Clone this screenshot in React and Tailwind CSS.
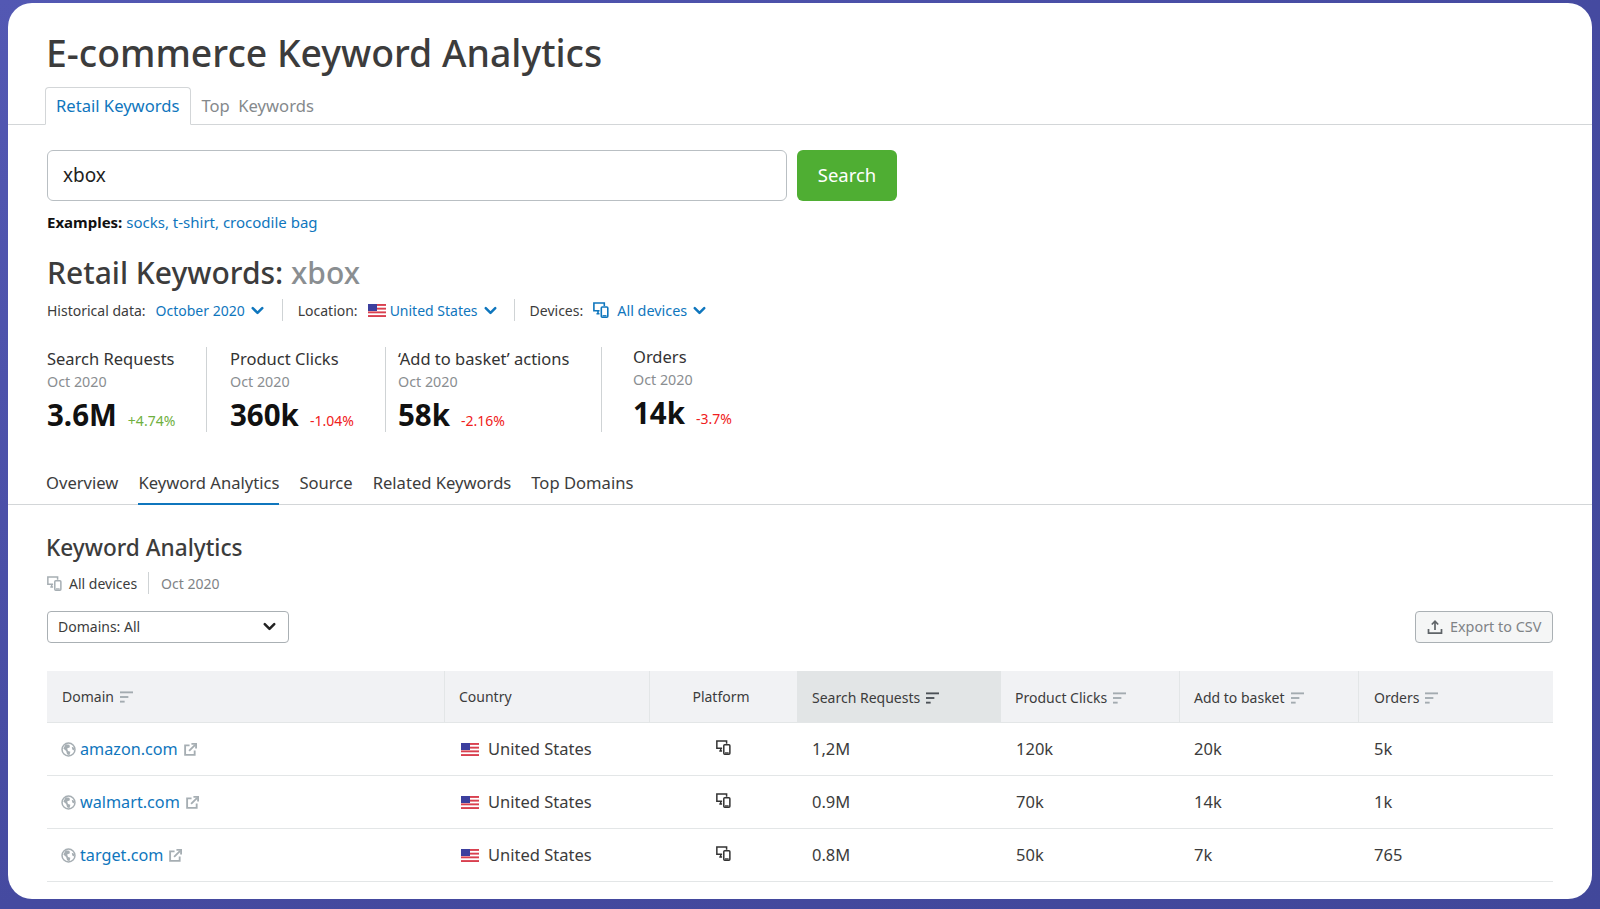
import React from 'react';
import { ChevronDown } from 'lucide-react';

const font = { fontFamily: '"Noto Sans", "Open Sans", sans-serif' };

function Flag({ className = 'w-[18px] h-[13px]' }) {
  return (
    <svg viewBox="0 0 18 13" className={className}>
      <rect width="18" height="13" fill="#fff" />
      <rect y="0" width="18" height="1.9" fill="#d9404f" />
      <rect y="3.7" width="18" height="1.9" fill="#d9404f" />
      <rect y="7.4" width="18" height="1.9" fill="#d9404f" />
      <rect y="11.1" width="18" height="1.9" fill="#d9404f" />
      <rect width="9" height="7" fill="#3c3f9e" />
    </svg>
  );
}

function Devices({ className }) {
  return (
    <svg viewBox="0 0 16 16" fill="none" className={className} stroke="currentColor" strokeWidth="1.6">
      <path d="M6.5 8.8H.9V1h10.4v3" />
      <path d="M3.5 11.8h3M5 9v2.8" />
      <rect x="8.3" y="5" width="6.5" height="10.2" rx="1" />
      <path d="M9.5 13.8h4" strokeWidth="1.4" />
    </svg>
  );
}

function SortIcon({ dark }) {
  const color = dark ? '#4b5157' : '#a3abb0';
  return (
    <svg viewBox="0 0 14 12" className="w-[13px] h-[12px] ml-[6px]">
      <rect x="0" y="0" width="14" height="2" fill={color} />
      <rect x="0" y="5" width="9" height="2" fill={color} />
      <rect x="0" y="10" width="5" height="2" fill={color} />
    </svg>
  );
}

function Globe() {
  return (
    <svg viewBox="0 0 16 16" className="w-[15px] h-[15px]">
      <circle cx="8" cy="8" r="6.9" fill="none" stroke="#a6aeb3" strokeWidth="1.6" />
      <path d="M5 2.5 L9 3 L9.5 5.5 L6.5 7 L7.5 9.5 L10 10.5 L9 14 L6.5 13 L5.5 9.5 L2.5 7 Z" fill="#a6aeb3" />
      <path d="M11.5 5 L14 6 L14 9 L12 8 Z" fill="#a6aeb3" />
    </svg>
  );
}

function ExternalLink() {
  return (
    <svg viewBox="0 0 14 14" fill="none" stroke="#a6aeb3" strokeWidth="2" className="w-[13px] h-[13px] ml-[6px]">
      <path d="M6 2.5H1.2v10.3h10.3V8" />
      <path d="M5.5 8.5 12 2" />
      <path d="M8 1h5v5" />
    </svg>
  );
}

function Divider({ className }) {
  return <div className={`w-px bg-[#cfd3d5] ${className}`} />;
}

function Stat({ label, value, delta, deltaColor, className, shift }) {
  return (
    <div className={className}>
      <div className={shift ? '-mt-[2px]' : ''}>
        <div className="text-[16.5px] leading-[22px] text-[#333]">{label}</div>
        <div className="text-[14.3px] leading-[18px] mt-[3px] text-[#8a8e91]">Oct 2020</div>
        <div className="flex items-baseline mt-[6px]">
          <span className="text-[29.5px] leading-[36px] font-bold text-[#111]">{value}</span>
          <span className={`text-[14px] ml-[11px] ${deltaColor}`}>{delta}</span>
        </div>
      </div>
    </div>
  );
}

const rows = [
  { domain: 'amazon.com', sr: '1,2M', pc: '120k', ab: '20k', o: '5k' },
  { domain: 'walmart.com', sr: '0.9M', pc: '70k', ab: '14k', o: '1k' },
  { domain: 'target.com', sr: '0.8M', pc: '50k', ab: '7k', o: '765' },
];

const cols = 'grid grid-cols-[397px_205px_148px_204px_179px_179px_194px]';

export default function App() {
  return (
    <div style={font} className="w-[1600px] h-[909px] overflow-hidden bg-gradient-to-br from-[#5358b3] via-[#454aa0] to-[#41479a] pt-[3px] pl-2 pr-2">
      <div className="w-[1584px] h-[896px] bg-white rounded-[24px] overflow-hidden">
        <div className="h-[84px] pl-[38px] pt-[28px]">
          <h1 className="text-[37.4px] leading-[44px] font-medium text-[#3c3c3c]">E-commerce Keyword Analytics</h1>
        </div>

        <div className="flex items-end h-[38px] border-b border-[#d3d6d8] pl-[37px]">
          <div className="h-[38px] -mb-px pl-[10px] pr-[11px] flex items-center border border-[#d3d6d8] border-b-white rounded-t-[4px] bg-white text-[16.6px] text-[#0f76bd]">Retail Keywords</div>
          <div className="h-[38px] -mb-px pl-[10px] flex items-center text-[16.6px] text-[#85898c] whitespace-pre">Top  Keywords</div>
        </div>

        <div className="pl-[39px] pt-[25px]">
          <div className="flex gap-[10px]">
            <div className="w-[740px] h-[51px] border-[1.5px] border-[#b9bfc3] rounded-[6px] flex items-center pl-[15px] text-[19px] text-[#222]">xbox</div>
            <button className="w-[100px] h-[51px] pb-[2px] rounded-[6px] bg-[#4fae33] text-white text-[18.5px]">Search</button>
          </div>
          <div className="mt-[10px] text-[15px] leading-[22px] text-[#0f76bd]">
            <span className="font-bold text-[#111]">Examples:</span> socks, t-shirt, crocodile bag
          </div>
          <h2 className="mt-[20px] text-[30px] leading-[40px] font-medium text-[#3c3c3c]">
            Retail Keywords: <span className="text-[#8a8e91]">xbox</span>
          </h2>

          <div className="flex items-center mt-[5px] h-[24px] text-[14px] text-[#3c3c3c]">
            <span>Historical data:</span>
            <span className="ml-[10px] text-[#0f76bd]">October 2020</span>
            <ChevronDown className="w-[19px] h-[19px] ml-[3px] text-[#0f76bd]" strokeWidth={3.2} />
            <Divider className="h-[22px] ml-[15px]" />
            <span className="ml-[15px]">Location:</span>
            <Flag className="ml-[10px] w-[18px] h-[13px]" />
            <span className="ml-[4px] text-[#0f76bd]">United States</span>
            <ChevronDown className="w-[19px] h-[19px] ml-[3px] text-[#0f76bd]" strokeWidth={3.2} />
            <Divider className="h-[22px] ml-[14px]" />
            <span className="ml-[15px]">Devices:</span>
            <Devices className="ml-[10px] w-[16px] h-[16px] text-[#0f76bd]" />
            <span className="ml-[8px] pt-px text-[14.4px] text-[#0f76bd]">All devices</span>
            <ChevronDown className="w-[19px] h-[19px] ml-[3px] text-[#0f76bd]" strokeWidth={3.2} />
          </div>

          <div className="flex mt-[26px] h-[85px]">
            <Stat className="w-[159px]" label="Search Requests" value="3.6M" delta="+4.74%" deltaColor="text-[#6fb03f]" />
            <Divider className="-mt-px h-[85px]" />
            <Stat className="w-[178px] pl-[23px]" label="Product Clicks" value="360k" delta="-1.04%" deltaColor="text-[#f02020]" />
            <Divider className="-mt-px h-[85px]" />
            <Stat className="w-[215px] pl-[12px]" label="‘Add to basket’ actions" value="58k" delta="-2.16%" deltaColor="text-[#f02020]" />
            <Divider className="-mt-px h-[85px]" />
            <Stat className="pl-[31px]" shift label="Orders" value="14k" delta="-3.7%" deltaColor="text-[#f02020]" />
          </div>
        </div>

        <div className="flex items-end h-[48px] mt-[24px] border-b border-[#d3d6d8] pl-[38px] text-[16.6px] text-[#3c3c3c]">
          <div className="h-[48px] -mb-px pt-[6px] flex items-center border-b-2 border-transparent">Overview</div>
          <div className="h-[48px] -mb-px pt-[6px] ml-5 flex items-center border-b-2 border-[#0f76bd]">Keyword Analytics</div>
          <div className="h-[48px] -mb-px pt-[6px] ml-5 flex items-center border-b-2 border-transparent">Source</div>
          <div className="h-[48px] -mb-px pt-[6px] ml-5 flex items-center border-b-2 border-transparent">Related Keywords</div>
          <div className="h-[48px] -mb-px pt-[6px] ml-5 flex items-center border-b-2 border-transparent">Top Domains</div>
        </div>

        <div className="px-[39px] pt-[26px]">
          <h3 className="-ml-px text-[22.6px] leading-[34px] font-medium text-[#3c3c3c]">Keyword Analytics</h3>
          <div className="flex items-center mt-[7px] h-[22px] text-[14px]">
            <Devices className="w-[15px] h-[15px] text-[#a6aeb3]" />
            <span className="ml-[7px] text-[#3c3c3c]">All devices</span>
            <Divider className="h-[22px] ml-[11px]" />
            <span className="ml-[12px] text-[#7f8386]">Oct 2020</span>
          </div>

          <div className="flex justify-between mt-[17px]">
            <div className="w-[242px] h-[32px] border border-[#aab0b4] rounded-[4px] flex items-center justify-between pl-[10px] pr-[9px] pb-px text-[14px] text-[#3c3c3c]">
              Domains: All
              <ChevronDown className="w-[19px] h-[19px] text-[#222]" strokeWidth={3.2} />
            </div>
            <div className="w-[138px] h-[32px] border border-[#aab0b4] bg-[#f5f6f6] rounded-[4px] flex items-center pl-[11px] pb-px text-[14.4px] text-[#7f8386]">
              <svg viewBox="0 0 16 16" fill="none" stroke="#5f6468" strokeWidth="1.7" className="w-[16px] h-[16px]">
                <path d="M8 11V2.5M4.8 5.5 8 2.2l3.2 3.3M1.5 10v4.2h13V10" />
              </svg>
              <span className="ml-[7px]">Export to CSV</span>
            </div>
          </div>

          <div className={`${cols} mt-[28px] h-[52px] bg-[#f1f2f4] border-b border-[#e3e6e7] text-[14px] text-[#3c3c3c]`}>
            <div className="flex items-center pl-[15px]">Domain<SortIcon /></div>
            <div className="flex items-center pl-[14px] border-l border-[#e3e6e7]">Country</div>
            <div className="flex items-center justify-center pr-[5px] border-l border-[#e3e6e7]">Platform</div>
            <div className="flex items-center pl-[15px] pt-[2px] bg-[#e2e5e6]">Search Requests<SortIcon dark /></div>
            <div className="flex items-center pl-[14px] pt-[2px] border-r border-[#e3e6e7]">Product Clicks<SortIcon /></div>
            <div className="flex items-center pl-[14px] pt-[2px] border-r border-[#e3e6e7]">Add to basket<SortIcon /></div>
            <div className="flex items-center pl-[15px] pt-[2px]">Orders<SortIcon /></div>
          </div>

          {rows.map((r) => (
            <div key={r.domain} className={`${cols} h-[53px] border-b border-[#e3e6e7] text-[16.5px] text-[#3c3c3c]`}>
              <div className="flex items-center pl-[14px]">
                <Globe />
                <span className="ml-[4px] text-[16.2px] text-[#0f76bd]">{r.domain}</span>
                <ExternalLink />
              </div>
              <div className="flex items-center pl-[17px]">
                <Flag />
                <span className="ml-[9px]">United States</span>
              </div>
              <div className="flex items-center justify-center">
                <Devices className="w-[15px] h-[15px] -mt-[3px] text-[#333]" />
              </div>
              <div className="flex items-center pl-[15px]">{r.sr}</div>
              <div className="flex items-center pl-[15px]">{r.pc}</div>
              <div className="flex items-center pl-[14px]">{r.ab}</div>
              <div className="flex items-center pl-[15px]">{r.o}</div>
            </div>
          ))}
        </div>
      </div>
    </div>
  );
}
